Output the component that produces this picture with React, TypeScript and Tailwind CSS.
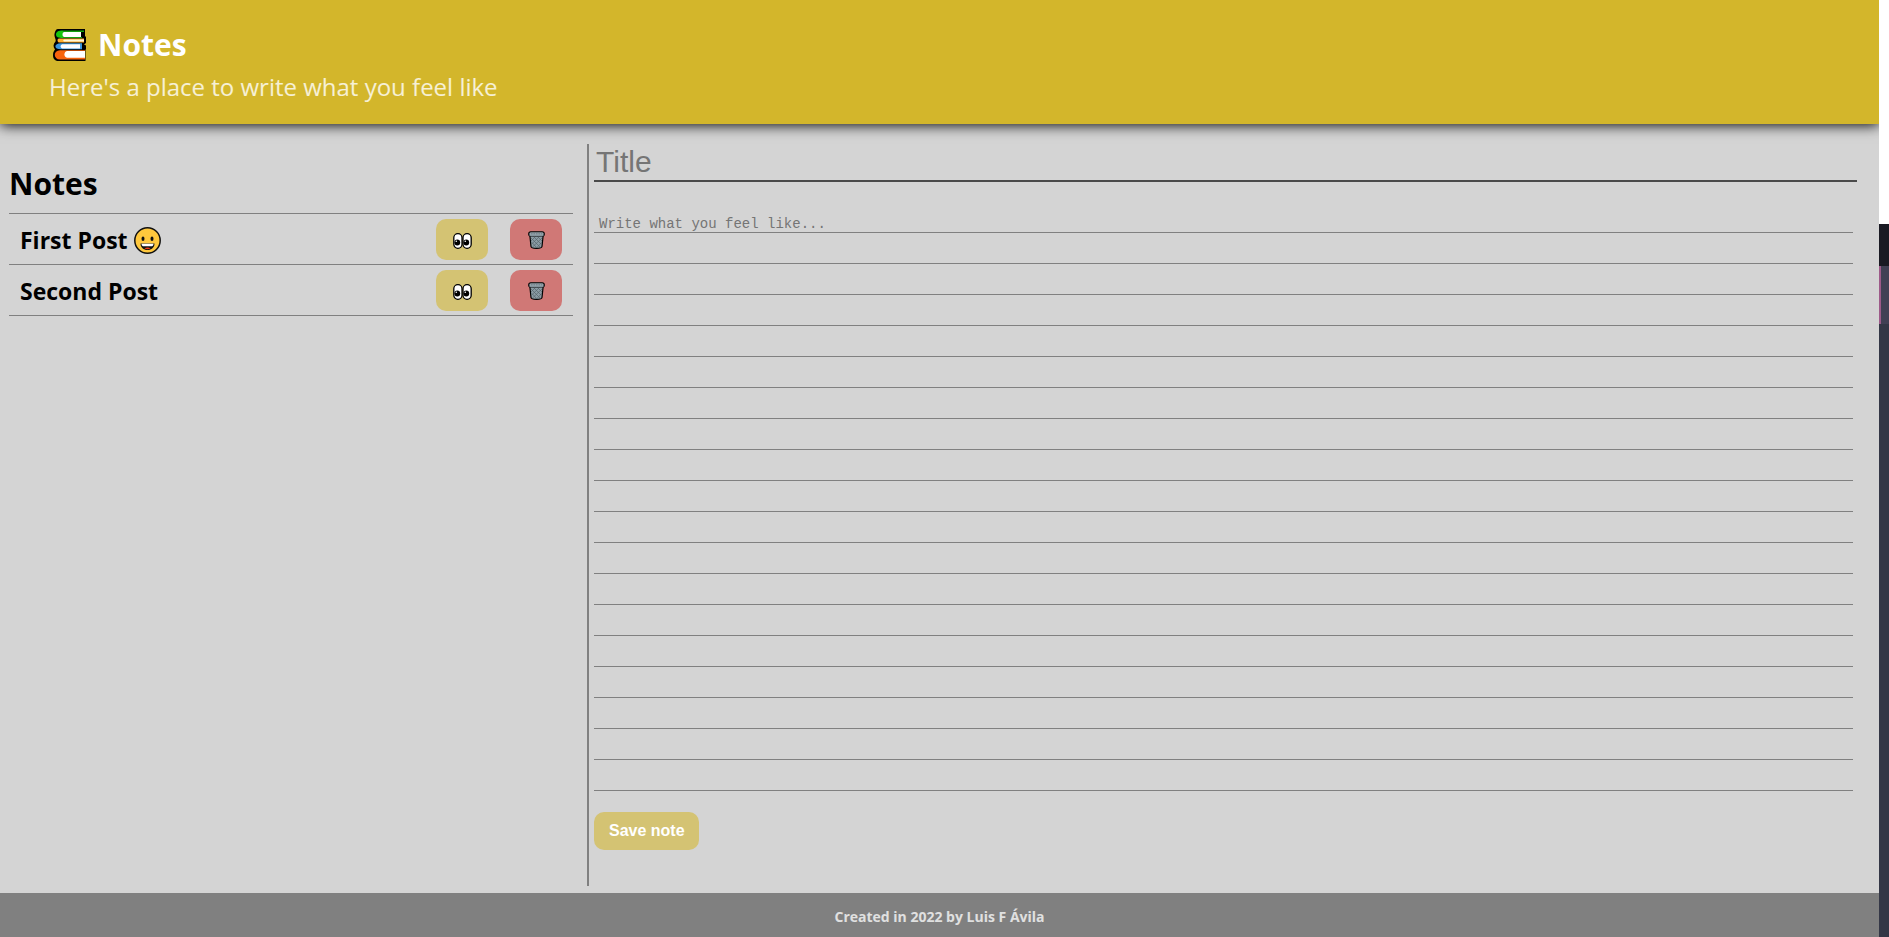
import { useState } from "react";

function BooksIcon() {
  return (
    <svg viewBox="0 0 33 32" className="h-8 w-[33px]" aria-hidden="true">
      <path d="M5 0H32V8L33 7V14L31 15.5L33 16.500V20L32.500 21V32H6C2 32 0 30 0 26C0 23 1 22 2 20.5C0 18 0 15 2.5 12.5C3.5 11 1 8 1.5 5C2 2 3 0 5 0Z" fill="#000" />
      <path d="M10 1.5H31V3H10ZM9 8H29V9H9Z" fill="#13a10e" />
      <path d="M10 1.5C5 1.5 3 3 3 5.5C3 8 5 9 10 9Z" fill="#16c60c" />
      <path d="M11 3H28V8H11C9 8 9 3 11 3Z" fill="#fff" />
      <path d="M6 9.5H31V13.500H6C4 13 4 9.5 6 9.5Z" fill="#ffb02e" />
      <path d="M11 10.5H31V12.6H11C10 12 10 11 11 10.5Z" fill="#fff8d8" />
      <path d="M8 14.200H29V20.3H8C0.500 20.300 0.500 14.200 8 14.200Z" fill="#3a96dd" />
      <path d="M9 15.200H27V19.400H9C7 18 7 16.500 9 15.200Z" fill="#fff" />
      <path d="M7 21.200H32V30.500H7C0 30.500 0 21.200 7 21.200Z" fill="#f7630c" />
      <path d="M14 22H32V28.800H14C10.500 28 10.500 23 14 22Z" fill="#fff" />
    </svg>
  );
}

function GrinIcon() {
  return (
    <svg viewBox="0 0 27 27" className="size-[27px]" aria-hidden="true">
      <circle cx="13.500" cy="13.500" r="12.700" fill="#ffc83d" stroke="#111" strokeWidth="1.500" />
      <ellipse cx="9" cy="11.700" rx="1.500" ry="2.200" fill="#111" />
      <ellipse cx="18" cy="11.700" rx="1.500" ry="2.200" fill="#111" />
      <path d="M6.500 16.500H20.500C20.500 20.500 17.500 23 13.500 23S6.500 20.500 6.500 16.500Z" fill="#111" />
      <path d="M7.500 16.800H19.500C19.500 18.800 18.500 19.300 17 19.300H10C8.500 19.300 7.500 18.800 7.500 16.800Z" fill="#fff" />
      <path d="M10.500 21.500C12 20 15 20 16.500 21.500C15 22.500 12 22.500 10.500 21.500Z" fill="#f03a17" />
    </svg>
  );
}

function EyesIcon() {
  return (
    <svg viewBox="0 0 19 16" className="h-4 w-[19px]" aria-hidden="true">
      <rect x="0.800" y="0.700" width="8.200" height="14.600" rx="4" fill="#fff" stroke="#000" strokeWidth="1.300" />
      <rect x="10" y="0.700" width="8.200" height="14.600" rx="4" fill="#fff" stroke="#000" strokeWidth="1.300" />
      <circle cx="4.300" cy="9.500" r="2.900" />
      <circle cx="13.300" cy="9.500" r="2.900" />
      <circle cx="3.300" cy="8.300" r="0.800" fill="#fff" />
      <circle cx="12.300" cy="8.300" r="0.800" fill="#fff" />
    </svg>
  );
}

function TrashIcon() {
  return (
    <svg viewBox="0 0 17 18" className="h-[18px] w-[17px]" aria-hidden="true">
      <path d="M1.800 4L3 15.500C3.300 18 13.700 18 14 15.500L15.200 4Z" fill="#8a9ba4" stroke="#000" strokeWidth="1.200" />
      <path d="M3 7L12.500 16.500M5.500 5.500L13.500 13.500M9.500 5.500L14 10M4 11.500L8.500 16.500M14 7L4.500 16M11.500 5.500L3.700 13M7.500 5.500L3 10M13.500 11.500L9 16.500" stroke="#56646c" strokeWidth="0.700" />
      <rect x="0.700" y="0.800" width="15.600" height="4.200" rx="2.100" fill="#93a2aa" stroke="#000" strokeWidth="1.100" />
      <path d="M1.500 4.600H15.500" stroke="#8a9ba4" strokeWidth="1" />
      <path d="M3 2.800H14" stroke="#6f7d85" strokeWidth="1" strokeDasharray="1.500 1" />
    </svg>
  );
}

type Note = { id: number; title: string; body: string; grin?: boolean };

const initialNotes: Note[] = [
  { id: 1, title: "First Post", body: "", grin: true },
  { id: 2, title: "Second Post", body: "" },
];

export default function App() {
  const [notes, setNotes] = useState(initialNotes);
  const [title, setTitle] = useState("");
  const [body, setBody] = useState("");

  const save = () => {
    if (!title.trim()) return;
    setNotes([...notes, { id: Date.now(), title, body }]);
    setTitle("");
    setBody("");
  };

  return (
    <div className="flex min-h-screen font-['Open_Sans',sans-serif]">
      <div className="flex min-w-0 flex-1 flex-col overflow-hidden bg-[#d4d4d4]">
        <header className="bg-[#d3b62b] px-[49px] pt-[25px] pb-[19px] shadow-[0_1px_13px_black]">
          <h1 className="flex h-11 items-center gap-3 pb-1 pl-1 text-[30px] leading-10 font-bold text-white">
            <BooksIcon />
            Notes
          </h1>
          <p className="text-[24px] leading-9 text-white/80">Here's a place to write what you feel like</p>
        </header>

        <main className="flex flex-1 pt-5 pr-[22px] pb-[7px] pl-[9px]">
          <section className="mr-[14px] w-[564px] shrink-0 pt-5">
            <h2 className="h-[49px] text-[30px] leading-10 font-bold text-black">Notes</h2>
            <ul className="border-t border-[#808080]">
              {notes.map((note) => (
                <li key={note.id} className="flex h-[51px] items-center gap-[22px] border-b border-[#808080] px-[11px]">
                  <h3 className="flex flex-1 items-center gap-1.5 pt-0.5 text-[23px] leading-8 font-bold text-black">
                    {note.title}
                    {note.grin && <GrinIcon />}
                  </h3>
                  <button
                    type="button"
                    aria-label={`View ${note.title}`}
                    onClick={() => { setTitle(note.title); setBody(note.body); }}
                    className="flex h-[41px] w-[52px] items-center justify-center rounded-[10px] bg-[#d4c373] pt-1 pl-px"
                  >
                    <EyesIcon />
                  </button>
                  <button
                    type="button"
                    aria-label={`Delete ${note.title}`}
                    onClick={() => setNotes(notes.filter((n) => n.id !== note.id))}
                    className="flex h-[41px] w-[52px] items-center justify-center rounded-[10px] bg-[#d07876] pt-0.5"
                  >
                    <TrashIcon />
                  </button>
                </li>
              ))}
            </ul>
          </section>

          <section className="flex flex-1 flex-col items-start border-l-2 border-[#808080] pl-[5px]">
            <input
              type="text"
              aria-label="Title"
              placeholder="Title"
              value={title}
              onChange={(e) => setTitle(e.target.value)}
              className="h-[38px] w-full border-b-2 border-[#4a4a4a] px-0.5 font-['Liberation_Sans',sans-serif] text-[30px] leading-8 text-black outline-none placeholder:text-[#757575]"
            />
            <div className="mt-5 w-full pr-1">
              <textarea
                aria-label="Note text"
                placeholder="Write what you feel like..."
                value={body}
                onChange={(e) => setBody(e.target.value)}
                className="block h-[589px] w-full resize-none bg-[repeating-linear-gradient(to_bottom,transparent_0px,transparent_30px,#808080_30px,#808080_31px)] px-[5px] pt-[7px] font-['Liberation_Mono',monospace] text-[14px] leading-[31px] text-black outline-none placeholder:text-[#757575]"
              />
            </div>
            <button
              type="button"
              onClick={save}
              className="mt-[21px] h-[38px] rounded-[10px] bg-[#d4c373] pr-3.5 pl-[15px] font-['Liberation_Sans',sans-serif] text-base font-bold text-white"
            >
              Save note
            </button>
          </section>
        </main>

        <footer className="flex h-11 items-center justify-center bg-[#808080] pt-0.5 text-[14px] font-bold text-[#e0e0e0]">
          Created in 2022 by Luis F Ávila
        </footer>
      </div>

      <div className="flex w-2.5 shrink-0 flex-col">
        <div className="h-56 bg-white" />
        <div className="h-[42px] bg-[#1a1a23]" />
        <div className="h-[58px] border-l-2 border-[#9d5a89] bg-[#414054]" />
        <div className="flex-1 bg-[#343746]" />
      </div>
    </div>
  );
}
